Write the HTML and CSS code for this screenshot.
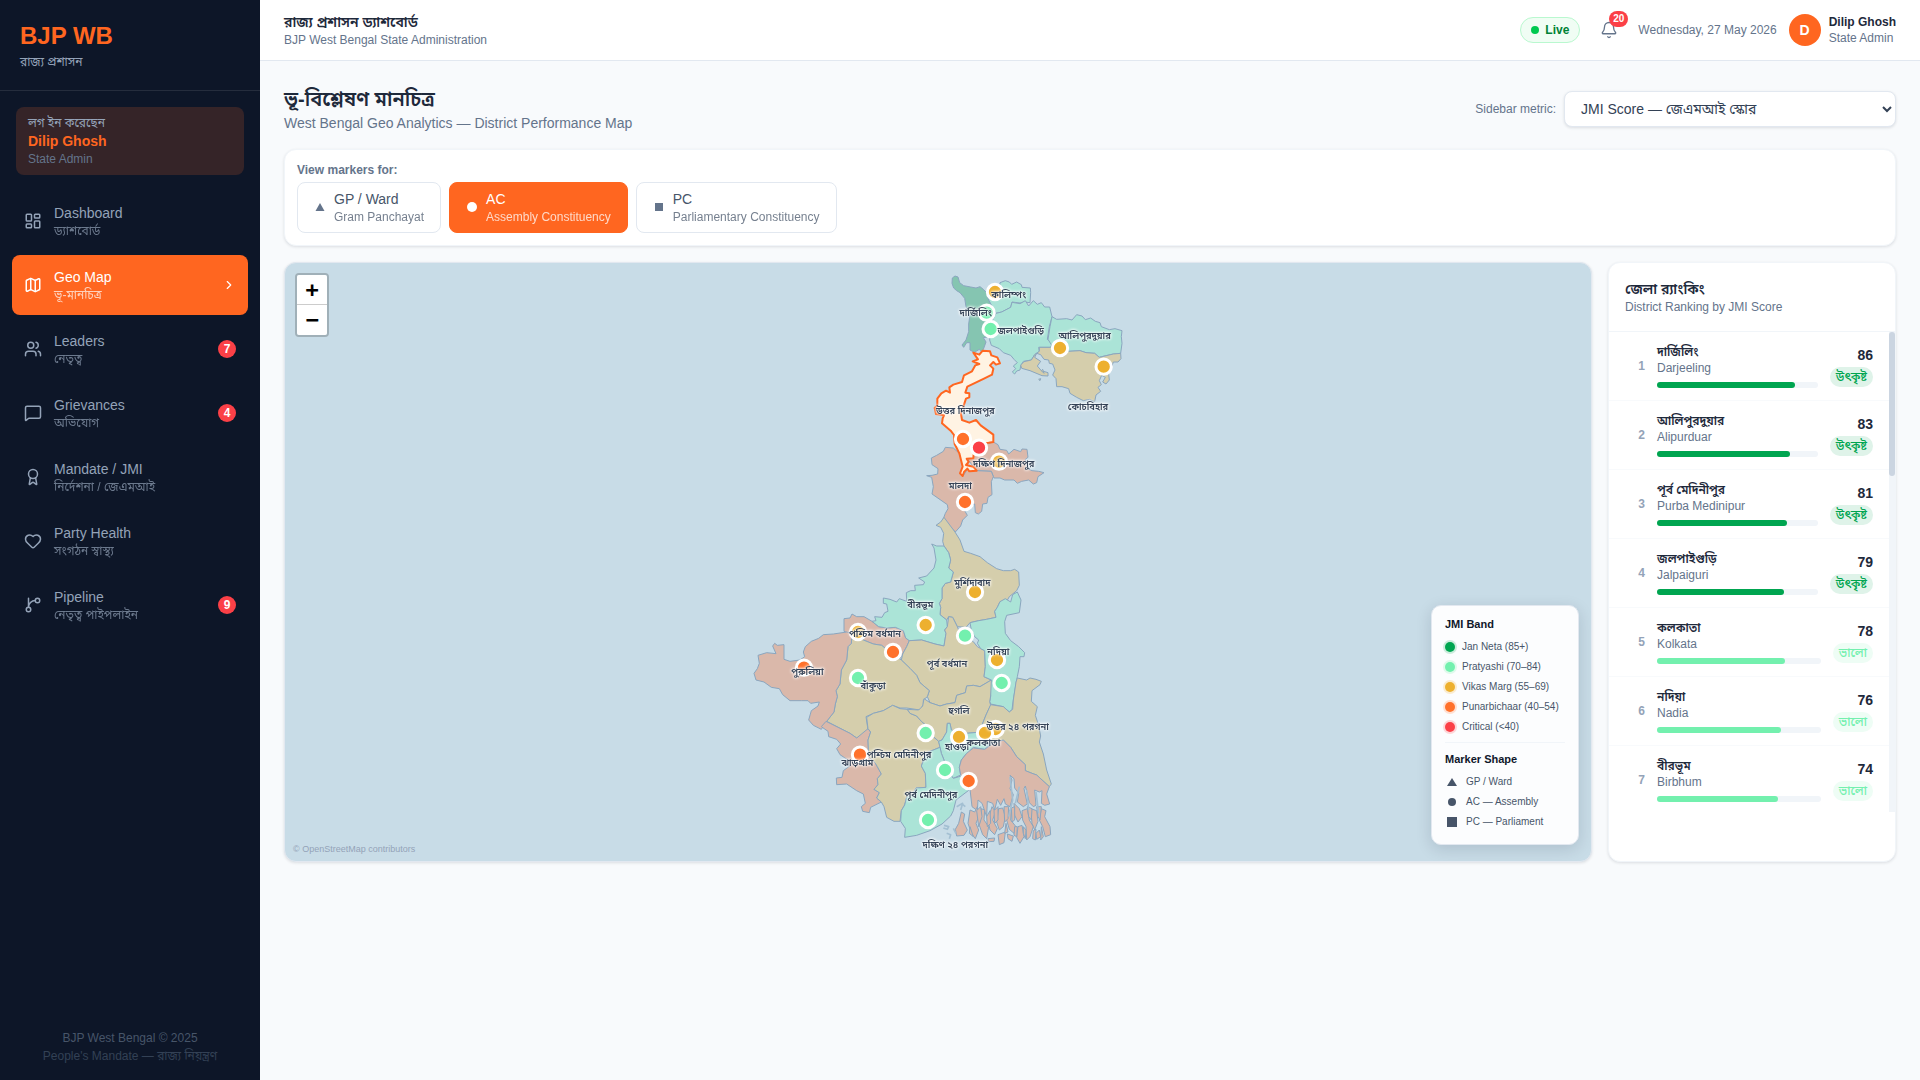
FILE: index.html
```html
<!DOCTYPE html>
<html lang="en">
<head>
<meta charset="utf-8">
<meta name="viewport" content="width=device-width, initial-scale=1">
<title>BJP WB — Geo Map</title>
<link rel="stylesheet" href="styles.css">
</head>
<body>
<div class="app">
  <aside class="sidebar">
    <div class="brand">
      <div class="brand-name">BJP WB</div>
      <div class="brand-sub">রাজ্য প্রশাসন</div>
    </div>
    <div class="user-card">
      <div class="user-card-label">লগ ইন করেছেন</div>
      <div class="user-card-name">Dilip Ghosh</div>
      <div class="user-card-role">State Admin</div>
    </div>
    <nav class="nav">
      <a class="nav-item" href="#dashboard">
        <svg class="icon" viewBox="0 0 24 24"><rect x="3" y="3" width="7" height="9" rx="1"/><rect x="14" y="3" width="7" height="5" rx="1"/><rect x="14" y="12" width="7" height="9" rx="1"/><rect x="3" y="16" width="7" height="5" rx="1"/></svg>
        <span class="nav-text"><span class="nav-title">Dashboard</span><span class="nav-sub">ড্যাশবোর্ড</span></span>
      </a>
      <a class="nav-item active" href="#map">
        <svg class="icon" viewBox="0 0 24 24"><path d="M14.106 5.553a2 2 0 0 0 1.788 0l3.659-1.83A1 1 0 0 1 21 4.619v12.764a1 1 0 0 1-.553.894l-4.553 2.277a2 2 0 0 1-1.788 0l-4.212-2.106a2 2 0 0 0-1.788 0l-3.659 1.83A1 1 0 0 1 3 19.381V6.618a1 1 0 0 1 .553-.894l4.553-2.277a2 2 0 0 1 1.788 0z"/><path d="M15 5.764v15"/><path d="M9 3.236v15"/></svg>
        <span class="nav-text"><span class="nav-title">Geo Map</span><span class="nav-sub">ভূ-মানচিত্র</span></span>
        <svg class="icon chevron" viewBox="0 0 24 24"><path d="m9 18 6-6-6-6"/></svg>
      </a>
      <a class="nav-item" href="#leaders">
        <svg class="icon" viewBox="0 0 24 24"><path d="M16 21v-2a4 4 0 0 0-4-4H6a4 4 0 0 0-4 4v2"/><path d="M16 3.128a4 4 0 0 1 0 7.744"/><path d="M22 21v-2a4 4 0 0 0-3-3.87"/><circle cx="9" cy="7" r="4"/></svg>
        <span class="nav-text"><span class="nav-title">Leaders</span><span class="nav-sub">নেতৃত্ব</span></span>
        <span class="nav-badge">7</span>
      </a>
      <a class="nav-item" href="#grievances">
        <svg class="icon" viewBox="0 0 24 24"><path d="M22 17a2 2 0 0 1-2 2H6.828a2 2 0 0 0-1.414.586l-2.202 2.202A.71.71 0 0 1 2 21.286V5a2 2 0 0 1 2-2h16a2 2 0 0 1 2 2z"/></svg>
        <span class="nav-text"><span class="nav-title">Grievances</span><span class="nav-sub">অভিযোগ</span></span>
        <span class="nav-badge">4</span>
      </a>
      <a class="nav-item" href="#mandate">
        <svg class="icon" viewBox="0 0 24 24"><path d="m15.477 12.89 1.515 8.526a.5.5 0 0 1-.81.47l-3.58-2.687a1 1 0 0 0-1.197 0l-3.586 2.686a.5.5 0 0 1-.81-.469l1.514-8.526"/><circle cx="12" cy="8" r="6"/></svg>
        <span class="nav-text"><span class="nav-title">Mandate / JMI</span><span class="nav-sub">নির্দেশনা / জেএমআই</span></span>
      </a>
      <a class="nav-item" href="#health">
        <svg class="icon" viewBox="0 0 24 24"><path d="M2 9.5a5.5 5.5 0 0 1 9.591-3.676.56.56 0 0 0 .818 0A5.49 5.49 0 0 1 22 9.5c0 2.29-1.5 4-3 5.5l-5.492 5.313a2 2 0 0 1-3 .019L5 15c-1.5-1.5-3-3.2-3-5.5"/></svg>
        <span class="nav-text"><span class="nav-title">Party Health</span><span class="nav-sub">সংগঠন স্বাস্থ্য</span></span>
      </a>
      <a class="nav-item" href="#pipeline">
        <svg class="icon" viewBox="0 0 24 24"><path d="M15 6a9 9 0 0 0-9 9V3"/><circle cx="18" cy="6" r="3"/><circle cx="6" cy="18" r="3"/></svg>
        <span class="nav-text"><span class="nav-title">Pipeline</span><span class="nav-sub">নেতৃত্ব পাইপলাইন</span></span>
        <span class="nav-badge">9</span>
      </a>
    </nav>
    <footer class="side-footer">
      <div>BJP West Bengal © 2025</div>
      <div class="side-footer-dim">People's Mandate — রাজ্য নিয়ন্ত্রণ</div>
    </footer>
  </aside>

  <div class="main">
    <header class="topbar">
      <div>
        <div class="topbar-title">রাজ্য প্রশাসন ড্যাশবোর্ড</div>
        <div class="small-muted">BJP West Bengal State Administration</div>
      </div>
      <div class="topbar-right">
        <span class="live"><span class="live-dot"></span>Live</span>
        <button class="bell" type="button" aria-label="Notifications">
          <svg class="icon" viewBox="0 0 24 24"><path d="M10.268 21a2 2 0 0 0 3.464 0"/><path d="M3.262 15.326A1 1 0 0 0 4 17h16a1 1 0 0 0 .74-1.673C19.41 13.956 18 12.499 18 8A6 6 0 0 0 6 8c0 4.499-1.411 5.956-2.738 7.326"/></svg>
          <span class="bell-badge">20</span>
        </button>
        <span class="small-muted">Wednesday, 27 May 2026</span>
        <div class="account">
          <span class="avatar">D</span>
          <div>
            <div class="account-name">Dilip Ghosh</div>
            <div class="small-muted">State Admin</div>
          </div>
        </div>
      </div>
    </header>

    <main class="content">
      <div class="page-head">
        <div>
          <h1 class="page-title">ভূ-বিশ্লেষণ মানচিত্র</h1>
          <p class="page-sub">West Bengal Geo Analytics — District Performance Map</p>
        </div>
        <div class="metric">
          <label class="small-muted" for="metric">Sidebar metric:</label>
          <select class="metric-select" id="metric"><option>JMI Score — জেএমআই স্কোর</option></select>
        </div>
      </div>

      <section class="card filter">
        <div class="filter-label">View markers for:</div>
        <div class="filter-row">
          <button class="filter-btn" type="button">
            <svg class="shape" viewBox="0 0 12 12"><path d="M6 2 10.500 10H1.500z"/></svg>
            <span class="filter-text"><span class="filter-name">GP / Ward</span><span class="filter-sub">Gram Panchayat</span></span>
          </button>
          <button class="filter-btn selected" type="button">
            <svg class="shape" viewBox="0 0 12 12"><circle cx="6" cy="6" r="5"/></svg>
            <span class="filter-text"><span class="filter-name">AC</span><span class="filter-sub">Assembly Constituency</span></span>
          </button>
          <button class="filter-btn" type="button">
            <svg class="shape" viewBox="0 0 12 12"><path d="M2 2h8v8H2z"/></svg>
            <span class="filter-text"><span class="filter-name">PC</span><span class="filter-sub">Parliamentary Constituency</span></span>
          </button>
        </div>
      </section>

      <div class="columns">
        <section class="map">
          <div class="zoom">
            <button class="zoom-btn" type="button">+</button>
            <button class="zoom-btn" type="button">−</button>
          </div>
          <svg class="map-art" viewBox="0 0 1200 1794" role="img" aria-label="West Bengal districts">
            <g class="regions" transform="translate(546 -9)">
              <path class="b1" d="M96 70 97 54 105 48 114 51 119 68 131 77 152 81 168 84 180 80 190 88 200 98 206 120 214 135 228 160 218 180 212 200 207 230 190 233 198 246 190 268 184 275 178 268 163 277 150 270 150 248 140 248 131 262 126 255 138 240 146 215 146 192 150 165 138 140 134 115 120 98 110 92 101 84z"/>
              <path class="b2" d="M200 96 215 92 238 90 240 68 256 62 268 66 275 73 290 66 304 74 306 82 331 84 332 98 330 128 312 126 300 129 276 126 272 142 245 156 228 160 214 135 206 120z"/>
              <path class="b2" d="M228 160 245 156 272 142 276 127 300 131 316 122 326 138 340 122 352 133 364 128 374 141 389 141 396 170 388 200 382 238 397 250 392 262 356 262 358 274 344 284 334 300 310 304 302 318 300 330 290 333 284 342 277 336 287 326 280 318 292 308 282 298 272 286 250 278 238 266 214 256 209 240 212 205 218 180z"/>
              <path class="b2" d="M396 170 410 178 440 176 456 180 470 164 486 168 496 179 512 174 526 184 540 188 544 200 568 209 585 206 606 212 604 230 606 250 602 280 580 282 545 290 538 292 524 280 498 278 480 272 446 274 420 286 400 264 384 238 390 200z"/>
              <path class="b3" d="M358 262 392 262 400 264 420 286 446 274 480 272 498 278 524 280 538 292 580 282 602 280 603 296 594 306 580 306 574 324 566 342 568 360 558 372 548 366 556 352 545 346 538 362 544 374 534 382 542 394 528 405 524 425 508 418 490 422 470 412 450 400 446 386 426 380 410 380 408 356 398 345 405 330 398 312 388 310 386 300 372 298 362 284 350 280 344 292 362 304 352 318 364 332 384 338 384 348 366 347 330 332 305 325 302 315 312 305 334 300 344 284 358 274z"/>
              <path class="b3" d="M356 358 362 356 360 362zM364 332 372 340 368 328z"/>
            </g>
            <g class="regions" transform="translate(516 231)">
              <path class="b4" d="M236 310 250 306 264 314 270 328 290 331 296 342 312 328 332 335 336 327 351 328 354 352 346 358 352 386 366 392 386 394 402 398 384 410 380 428 370 432 356 420 335 424 322 430 312 420 284 420 270 414 252 414 244 394 200 392 190 380 172 356 190 355 190 325z"/>
              <path class="b4" d="M148 340 154 355 158 380 150 400 158 410 172 388 200 392 244 394 250 410 244 425 246 464 234 472 231 490 218 492 215 514 205 522 196 518 194 492 180 500 164 512 172 526 158 540 152 558 136 576 100 536 106 520 114 506 112 494 66 462 70 440 65 412 50 407 66 406 83 402 84 386 66 374 64 354 80 346 100 334 106 322 130 324z"/>
            </g>
            <g class="regions" transform="translate(6 711)">
              <path class="b4" d="M312 356 330 354 336 342 350 350 372 350 396 364 416 380 440 384 466 382 490 392 497 414 508 422 500 440 488 462 480 476 450 456 425 436 400 432 370 420 336 404 312 394z"/>
              <path class="b3" d="M612 52 645 96 660 120 672 154 692 160 720 170 742 188 770 206 790 212 812 212 824 208 836 216 838 256 830 272 808 290 800 304 780 305 772 322 764 334 768 352 740 358 716 362 690 368 678 382 652 380 638 352 626 350 620 360 600 344 602 322 598 310 606 296 606 264 616 250 632 246 640 216 626 204 632 180 626 158 612 138 608 124 611 100 602 82 588 76 602 66z"/>
              <path class="b2" d="M575 132 590 138 612 138 626 158 632 180 626 204 640 216 632 246 616 250 606 264 606 296 598 310 602 322 600 344 620 360 622 380 614 390 618 400 612 438 585 432 545 420 508 422 497 414 490 392 466 382 440 384 416 380 396 364 408 362 404 350 426 352 434 338 444 334 440 312 430 310 430 294 450 298 470 306 478 296 500 304 499 278 512 272 526 272 524 256 550 254 554 246 536 234 560 228 582 204 588 180 582 144z"/>
              <path class="b3" d="M508 422 545 420 585 432 612 438 618 400 614 390 622 380 626 350 638 352 652 380 660 400 676 410 700 425 712 440 734 452 736 500 732 530 754 540 720 560 700 556 680 558 676 578 650 586 645 608 620 612 600 618 570 608 562 590 568 572 540 548 530 526 510 505 484 480 488 462 500 440z"/>
              <path class="b2" d="M832 276 843 300 838 338 800 346 794 365 796 400 812 422 836 440 854 458 852 470 840 470 838 500 832 530 828 550 820 600 816 628 808 636 790 620 752 612 749 605 752 588 748 560 754 540 732 530 736 500 734 452 722 446 712 430 716 420 704 410 694 390 690 368 716 362 740 358 768 352 764 334 772 322 780 305 796 296 812 306 818 284z"/>
              <path class="b3" d="M336 404 370 420 400 432 425 436 450 456 484 480 510 505 530 526 540 548 568 572 562 590 550 600 550 614 540 630 500 624 480 624 458 616 430 632 400 640 378 650 384 690 375 704 350 714 330 700 260 664 282 636 286 612 292 590 288 572 300 552 304 510 320 480 324 440 334 430z"/>
              <path class="b4" d="M334 430 336 400 320 396 280 402 250 404 236 415 214 424 196 440 190 456 194 470 180 480 150 484 132 478 132 434 112 436 104 430 98 438 108 461 80 458 54 466 58 490 52 506 42 520 48 540 72 546 94 562 118 566 128 584 150 602 184 602 204 602 212 610 238 606 234 618 214 632 206 660 220 676 244 688 260 664 282 636 286 612 292 590 288 572 300 552 304 510 320 480 324 440z"/>
            </g>
            <g class="regions" transform="translate(6 1191)">
              <path class="b4" d="M258 184 330 220 350 234 384 206 392 216 384 240 386 290 405 308 412 320 424 342 412 356 414 374 402 388 418 398 410 414 424 426 392 442 388 458 368 454 364 440 376 430 370 402 350 392 320 372 290 374 289 354 306 352 310 332 332 316 324 300 300 284 290 266 302 252 290 238 266 230 264 214 244 200z"/>
              <path class="b3" d="M458 136 480 146 502 148 510 160 530 168 544 184 556 194 560 215 580 230 596 244 600 262 560 278 550 300 544 318 556 340 558 382 528 384 522 396 500 412 494 435 484 452 480 484 462 484 440 472 432 440 424 426 410 414 418 398 402 388 414 374 412 356 424 342 412 320 405 308 386 290 384 240 392 216 384 206 380 172 400 160 430 152z"/>
              <path class="b3" d="M552 116 570 128 600 138 620 132 645 128 650 106 676 98 680 78 700 76 720 80 754 60 752 108 749 125 752 136 738 165 730 185 724 200 722 216 680 220 650 216 634 210 630 190 622 190 620 216 606 240 596 244 580 230 560 215 556 194 544 184 530 168 510 160 502 148 536 150 548 138z"/>
              <path class="b3" d="M752 134 790 140 808 156 818 148 820 120 828 66 832 54 860 60 870 54 888 58 904 64 900 74 876 92 874 124 892 140 886 166 896 196 902 228 898 246 910 282 920 330 934 372 928 380 890 345 876 340 856 332 856 314 830 290 812 262 790 240 760 250 740 235 724 216 724 200 738 165z"/>
              <path class="b2" d="M622 190 630 190 634 210 650 216 680 220 722 216 740 235 745 256 734 268 700 262 680 280 664 300 658 322 662 345 640 355 620 330 612 300 604 280 600 262 596 244 606 240 620 216z"/>
              <path class="b2" d="M600 262 560 278 544 318 556 340 558 382 528 384 522 396 500 412 494 435 484 452 482 484 496 505 494 532 530 526 570 512 606 492 632 468 640 452 648 420 690 388 680 362 664 348 640 355 620 330 612 300 604 280z"/>
              <path class="b4" d="M664 300 680 280 700 264 734 268 760 250 790 240 812 262 830 290 856 314 856 332 876 340 890 345 928 380 920 402 929 432 914 436 904 430 906 392 898 396 884 390 888 436 880 440 868 428 856 378 852 386 862 432 850 440 832 426 836 400 824 384 822 356 810 346 816 360 810 386 820 404 810 440 796 432 792 416 782 436 772 418 764 450 758 430 742 424 740 470 726 430 714 420 712 452 696 440 690 388 680 362 662 345 658 322z"/>
              <path class="b4" d="M664 456 674 462 670 484 682 510 672 526 650 528 646 508 656 490zM690 450 704 456 712 440 716 470 708 490 716 510 706 536 694 520 684 490zM724 446 734 450 732 480 746 500 740 536 728 524 718 496zM744 480 756 440 766 456 758 480 772 506 764 524 750 510zM776 446 788 444 796 470 790 500 778 510 770 486zM774 524 796 516 792 548 778 554zM804 450 814 452 812 480 828 500 822 520 808 508 800 480zM822 430 838 446 846 470 834 486 824 466zM802 522 820 528 816 544 804 536zM834 500 846 496 852 530 840 550 830 532zM846 452 862 446 868 480 880 500 870 530 860 540 858 500 848 480zM872 446 890 452 894 484 884 510 876 490zM888 520 898 510 902 530 890 538zM904 446 918 452 914 470 930 500 932 524 916 530 908 500 898 480zM744 536 764 534 762 544 746 545z"/>
              <path class="b4" d="M710 452 722 440 726 470 716 500zM740 470 750 452 752 490 742 500zM762 452 774 440 774 480 764 490zM792 440 806 440 804 476 794 486zM814 444 824 440 824 480 816 486zM862 440 876 446 874 480 866 470zM890 440 904 440 900 480 894 470zM690 500 700 530 688 520zM798 490 804 516 794 520zM824 500 832 500 830 530 822 526zM850 500 858 510 856 536 850 520zM880 512 888 508 886 540 878 536zM904 500 910 530 902 540z"/>
              <path class="water" d="M810 350 818 420 806 470M838 380 826 430M860 390 866 450M888 396 896 460"/>
              <path class="water" d="M612 496 626 500 622 508 610 504M620 520 632 524 628 536M650 440 668 430 662 450M664 430 676 440M640 505 648 520"/>
            </g>
            <path class="selected-region" transform="translate(516 231)" d="M190 38 208 44 218 32 240 34 244 46 262 52 270 70 258 74 250 66 240 76 250 86 246 104 222 116 172 140 166 158 178 160 178 172 168 176 160 200 152 215 156 240 178 248 198 240 212 256 250 284 250 306 236 308 210 310 192 330 190 355 170 356 176 366 168 375 190 380 200 392 178 394 172 386 162 396 158 408 150 400 158 380 148 340 134 312 132 285 122 272 96 250 98 235 102 226 78 222 74 204 82 196 82 176 94 160 108 152 120 158 118 142 130 134 156 126 162 106 186 94 196 76 208 72 188 64 204 58z"/>

            <g class="markers" transform="translate(546 -9)">
              <circle class="m3" cx="225" cy="96" r="23"/><circle class="m2" cx="200" cy="158" r="23"/><circle class="m2" cx="212" cy="207" r="23"/><circle class="m3" cx="420" cy="264" r="23"/><circle class="m3" cx="551" cy="320" r="23"/>
            </g>
            <g class="markers" transform="translate(516 231)">
              <circle class="m4" cx="159" cy="297" r="23"/><circle class="m5" cx="207" cy="323" r="23"/><circle class="m3" cx="267" cy="365" r="23"/><circle class="m4" cx="165" cy="486" r="23"/>
            </g>
            <g class="markers" transform="translate(6 711)">
              <circle class="m3" cx="705" cy="276" r="23"/><circle class="m3" cx="557" cy="375" r="23"/><circle class="m3" cx="354" cy="396" r="23"/><circle class="m4" cx="459" cy="456" r="23"/><circle class="m4" cx="192" cy="503" r="23"/><circle class="m2" cx="354" cy="534" r="23"/><circle class="m2" cx="675" cy="407" r="23"/><circle class="m3" cx="771" cy="480" r="23"/><circle class="m2" cx="785" cy="549" r="23"/>
            </g>
            <g class="markers" transform="translate(6 1191)">
              <circle class="m2" cx="557" cy="219" r="23"/><circle class="m3" cx="657" cy="231" r="23"/><circle class="m3" cx="767" cy="207" r="23"/><circle class="m3" cx="735" cy="219" r="23"/><circle class="m4" cx="360" cy="284" r="23"/><circle class="m2" cx="615" cy="330" r="23"/><circle class="m4" cx="686" cy="363" r="23"/><circle class="m2" cx="564" cy="480" r="23"/>
            </g>

            <g class="labels" transform="translate(546 0)">
              <text x="266" y="105">কালিম্পং</text><text x="167" y="159">দার্জিলিং</text><text x="302" y="212">জলপাইগুড়ি</text><text x="494" y="228">আলিপুরদুয়ার</text><text x="504" y="440">কোচবিহার</text>
            </g>
            <g class="labels" transform="translate(516 240)">
              <text x="166" y="212">উত্তর দিনাজপুর</text><text x="281" y="371">দক্ষিণ দিনাজপুর</text><text x="151" y="437">মালদা</text>
            </g>
            <g class="labels" transform="translate(6 720)">
              <text x="697" y="250">মুর্শিদাবাদ</text><text x="541" y="314">বীরভূম</text><text x="405" y="401">পশ্চিম বর্ধমান</text><text x="621" y="491">পূর্ব বর্ধমান</text><text x="775" y="455">নদিয়া</text><text x="202" y="515">পুরুলিয়া</text><text x="399" y="557">বাঁকুড়া</text>
            </g>
            <g class="labels" transform="translate(6 1200)">
              <text x="657" y="152">হুগলি</text><text x="833" y="200">উত্তর ২৪ পরগনা</text><text x="651" y="261">হাওড়া</text><text x="730" y="248">কলকাতা</text><text x="477" y="284">পশ্চিম মেদিনীপুর</text><text x="352" y="308">ঝাড়গ্রাম</text><text x="573" y="405">পূর্ব মেদিনীপুর</text><text x="646" y="556">দক্ষিণ ২৪ পরগনা</text>
            </g>
          </svg>
          <div class="attribution">© OpenStreetMap contributors</div>
          <div class="legend">
            <div class="legend-title">JMI Band</div>
            <ul class="legend-list">
              <li><span class="dot d1"></span>Jan Neta (85+)</li>
              <li><span class="dot d2"></span>Pratyashi (70–84)</li>
              <li><span class="dot d3"></span>Vikas Marg (55–69)</li>
              <li><span class="dot d4"></span>Punarbichaar (40–54)</li>
              <li><span class="dot d5"></span>Critical (&lt;40)</li>
            </ul>
            <div class="legend-title legend-second">Marker Shape</div>
            <ul class="legend-list">
              <li><svg class="legend-shape" viewBox="0 0 14 14"><path d="M7 3 12 11H2z"/></svg>GP / Ward</li>
              <li><svg class="legend-shape" viewBox="0 0 14 14"><circle cx="7" cy="7" r="4"/></svg>AC — Assembly</li>
              <li><svg class="legend-shape" viewBox="0 0 14 14"><path d="M2 2h10v10H2z"/></svg>PC — Parliament</li>
            </ul>
          </div>
        </section>

        <aside class="card ranking">
          <div class="ranking-head">
            <h2 class="ranking-title">জেলা র‍্যাংকিং</h2>
            <p class="small-muted">District Ranking by JMI Score</p>
          </div>
          <div class="rank-scroll">
          <ol class="rank-list">
            <li class="rank s1"><span class="rank-no">1</span><div class="rank-mid"><div class="rank-bn">দার্জিলিং</div><div class="rank-en">Darjeeling</div><div class="bar"><div class="fill" style="width:86%"></div></div></div><div class="rank-end"><span class="score">86</span><span class="pill">উৎকৃষ্ট</span></div></li>
            <li class="rank s1"><span class="rank-no">2</span><div class="rank-mid"><div class="rank-bn">আলিপুরদুয়ার</div><div class="rank-en">Alipurduar</div><div class="bar"><div class="fill" style="width:83%"></div></div></div><div class="rank-end"><span class="score">83</span><span class="pill">উৎকৃষ্ট</span></div></li>
            <li class="rank s1"><span class="rank-no">3</span><div class="rank-mid"><div class="rank-bn">পূর্ব মেদিনীপুর</div><div class="rank-en">Purba Medinipur</div><div class="bar"><div class="fill" style="width:81%"></div></div></div><div class="rank-end"><span class="score">81</span><span class="pill">উৎকৃষ্ট</span></div></li>
            <li class="rank s1"><span class="rank-no">4</span><div class="rank-mid"><div class="rank-bn">জলপাইগুড়ি</div><div class="rank-en">Jalpaiguri</div><div class="bar"><div class="fill" style="width:79%"></div></div></div><div class="rank-end"><span class="score">79</span><span class="pill">উৎকৃষ্ট</span></div></li>
            <li class="rank s2"><span class="rank-no">5</span><div class="rank-mid"><div class="rank-bn">কলকাতা</div><div class="rank-en">Kolkata</div><div class="bar"><div class="fill" style="width:78%"></div></div></div><div class="rank-end"><span class="score">78</span><span class="pill">ভালো</span></div></li>
            <li class="rank s2"><span class="rank-no">6</span><div class="rank-mid"><div class="rank-bn">নদিয়া</div><div class="rank-en">Nadia</div><div class="bar"><div class="fill" style="width:76%"></div></div></div><div class="rank-end"><span class="score">76</span><span class="pill">ভালো</span></div></li>
            <li class="rank s2"><span class="rank-no">7</span><div class="rank-mid"><div class="rank-bn">বীরভূম</div><div class="rank-en">Birbhum</div><div class="bar"><div class="fill" style="width:74%"></div></div></div><div class="rank-end"><span class="score">74</span><span class="pill">ভালো</span></div></li>
          </ol>
          <div class="scroll-track"><div class="scroll-thumb"></div></div>
          </div>
        </aside>
      </div>
    </main>
  </div>
</div>
</body>
</html>
```
FILE: styles.css
```css
*, *::before, *::after { box-sizing: border-box; }
body, h1, h2, p, ul, ol { margin: 0; padding: 0; }
ul, ol { list-style: none; }
body {
  font-family: "Liberation Sans", "Noto Sans Bengali", sans-serif;
  font-size: 14px;
  line-height: 20px;
  color: #1e293b;
  background: #f8fafc;
}
button, select { font: inherit; }
a { color: inherit; text-decoration: none; }
.app { display: flex; min-height: 100vh; }

.icon {
  width: 18px; height: 18px; flex: none; display: block;
  fill: none; stroke: currentColor; stroke-width: 2;
  stroke-linecap: round; stroke-linejoin: round;
}
.small-muted { font-size: 12px; line-height: 16px; color: #64748b; }

/* Sidebar */
.sidebar {
  width: 260px; flex: none; display: flex; flex-direction: column;
  background: #0d1628; color: #94a3b8;
}
.brand { padding: 20px; border-bottom: 1px solid #252d3d; }
.brand-name { font-size: 24px; line-height: 32px; font-weight: 700; color: #ff6620; }
.brand-sub { margin-top: 2px; font-size: 12px; line-height: 16px; }
.user-card {
  margin: 16px 16px 0; padding: 8px 12px; border-radius: 8px;
  background: #352428; font-size: 12px; line-height: 16px;
}
.user-card-name { font-size: 14px; line-height: 20px; font-weight: 700; color: #ff6620; }
.user-card-role { color: #64748b; }
.nav { flex: 1; display: flex; flex-direction: column; gap: 4px; padding: 16px 12px; }
.nav-item { display: flex; align-items: center; gap: 12px; padding: 12px; border-radius: 8px; }
.nav-item.active { background: #ff6620; color: #fff; }
.nav-text { flex: 1; display: flex; flex-direction: column; }
.nav-sub { font-size: 12px; line-height: 16px; opacity: .7; }
.nav-badge {
  min-width: 18px; height: 18px; border-radius: 9px; background: #fb4047; color: #fff;
  font-size: 12px; line-height: 18px; font-weight: 700; text-align: center;
}
.chevron { width: 14px; height: 14px; }
.side-footer {
  display: flex; flex-direction: column; gap: 2px; padding: 16px;
  text-align: center; font-size: 12px; line-height: 16px; color: #475569;
}
.side-footer-dim { color: #334155; }

/* Top bar */
.main { flex: 1; min-width: 0; }
.topbar {
  display: flex; justify-content: space-between; align-items: center;
  padding: 12px 24px; background: #fff; border-bottom: 1px solid #e2e8f0;
}
.topbar-title { font-weight: 600; color: #1e293b; }
.topbar-right { display: flex; align-items: center; gap: 12px; height: 36px; }
.live {
  display: flex; align-items: center; gap: 6px; padding: 4px 10px;
  border: 1px solid #b9f8cf; border-radius: 13px; background: #f0fdf4;
  font-size: 12px; line-height: 16px; font-weight: 700; color: #008236;
}
.live-dot { width: 8px; height: 8px; border-radius: 50%; background: #00c950; }
.bell { position: relative; padding: 8px; border: 0; background: none; color: #64748b; }
.bell .icon { stroke-width: 1.75; }
.bell-badge {
  position: absolute; top: -2px; right: -2px; padding: 0 4px; border-radius: 8px;
  background: #fb4047; color: #fff; font-size: 10px; line-height: 16px; font-weight: 700;
}
.account { display: flex; align-items: center; gap: 8px; }
.avatar {
  width: 32px; height: 32px; border-radius: 50%; background: #ff6620; color: #fff;
  font-weight: 700; line-height: 32px; text-align: center;
}
.account-name { font-size: 12px; line-height: 16px; font-weight: 700; }

/* Page */
.content { display: flex; flex-direction: column; gap: 16px; padding: 24px; }
.page-head { display: flex; justify-content: space-between; align-items: center; }
.page-title { font-size: 20px; line-height: 28px; font-weight: 600; }
.page-sub { color: #64748b; }
.metric { display: flex; align-items: center; gap: 8px; }
.metric-select {
  width: 332px; height: 36px; padding: 0 0 0 12px; border: 1px solid #e2e8f0;
  border-radius: 8px; background: #fff; color: #334155;
  box-shadow: 0 1px 3px rgba(15, 23, 42, .12);
}
.card {
  background: #fff; border: 1px solid #f1f5f9; border-radius: 12px;
  box-shadow: 0 1px 3px rgba(15, 23, 42, .12);
}
.filter { padding: 12px; }
.filter-label { margin-bottom: 4px; font-size: 12px; line-height: 16px; font-weight: 700; color: #64748b; }
.filter-row { display: flex; gap: 8px; }
.filter-btn {
  display: flex; align-items: center; gap: 8px; padding: 6px 16px 7px;
  border: 1px solid #e2e8f0; border-radius: 8px; background: #fff; color: #475569; text-align: left;
}
.filter-btn.selected { background: #ff6620; border-color: #ff6620; color: #fff; }
.filter-text { display: flex; flex-direction: column; }
.filter-sub { font-size: 12px; line-height: 16px; opacity: .75; }
.shape { width: 12px; height: 12px; flex: none; fill: #64748b; }
.selected .shape { fill: #fff; }
.columns { display: grid; grid-template-columns: minmax(0, 1fr) 288px; gap: 16px; }

/* Map */
.map {
  position: relative; height: 600px; overflow: hidden; display: flex; justify-content: center;
  border: 1px solid #e2e8f0; border-radius: 12px; background: #c8dce7;
  box-shadow: 0 1px 3px rgba(15, 23, 42, .12);
}
.map-art { width: 400px; height: 598px; flex: none; }
.regions path { stroke: #8aa6bf; stroke-width: 3; stroke-linejoin: round; }
.b1 { fill: #85c5b1; }
.b2 { fill: #abe4d7; }
.b3 { fill: #d5ceac; }
.b4 { fill: #dab8aa; }
.regions .water { fill: none; stroke: #a3bfd2; stroke-width: 5; }
.selected-region { fill: #fff3e3; stroke: #ff6620; stroke-width: 6; stroke-linejoin: round; }
.markers circle { stroke: #fff; stroke-width: 9; }
.m2 { fill: #73f0ae; }
.m3 { fill: #edb02f; }
.m4 { fill: #ff712b; }
.m5 { fill: #fb4047; }
.labels text {
  font-size: 28px; font-weight: 600; fill: #334155; text-anchor: middle;
  filter: drop-shadow(0 0 3px #fff) drop-shadow(0 0 4px #fff);
}
.zoom {
  position: absolute; top: 10px; left: 10px; z-index: 1; display: flex; flex-direction: column;
  border: 2px solid rgba(0, 0, 0, .2); border-radius: 4px; background-clip: padding-box;
}
.zoom-btn {
  width: 30px; height: 30px; padding: 0; border: 0; background: #fff; color: #000;
  font: bold 22px/30px "DejaVu Sans Mono", monospace;
}
.zoom-btn:first-child { border-bottom: 1px solid #ccc; border-radius: 2px 2px 0 0; }
.zoom-btn:last-child { border-radius: 0 0 2px 2px; }
.attribution { position: absolute; left: 8px; bottom: 6px; font-size: 9px; line-height: 12px; color: #94a3b8; }
.legend {
  position: absolute; right: 12px; bottom: 16px; width: 148px; padding: 11px 13px 12px;
  border: 1px solid #e2e8f0; border-radius: 10px; background: #fcfdfe;
  box-shadow: 0 4px 16px rgba(15, 23, 42, .14); color: #475569; font-size: 10px;
}
.legend-title { margin-bottom: 5px; font-size: 11px; line-height: 15px; font-weight: 700; color: #0f172a; }
.legend-second { margin-top: 5px; padding-top: 9px; border-top: 1px solid #f1f5f9; }
.legend-list li { display: flex; align-items: center; gap: 7px; line-height: 20px; }
.dot { width: 10px; height: 10px; border-radius: 50%; }
.d1 { background: #00a550; box-shadow: 0 0 0 2px #ccecdc; }
.d2 { background: #73f0ae; box-shadow: 0 0 0 2px #dffaeb; }
.d3 { background: #edb02f; box-shadow: 0 0 0 2px #faecd0; }
.d4 { background: #ff712b; box-shadow: 0 0 0 2px #ffe0d2; }
.d5 { background: #fb4047; box-shadow: 0 0 0 2px #fdd6d8; }
.legend-shape { width: 14px; height: 14px; fill: #475569; }

/* Ranking */
.ranking-head { padding: 16px; border-bottom: 1px solid #f1f5f9; }
.ranking-title { font-size: 14px; line-height: 20px; font-weight: 600; }
.rank-scroll { display: flex; }
.rank-list { flex: 1; min-width: 0; }
.scroll-track { width: 6px; background: #f1f5f9; }
.scroll-thumb { height: 30%; border-radius: 3px; background: #cbd5e1; }
.rank { display: flex; align-items: center; gap: 12px; padding: 12px 16px; border-bottom: 1px solid #f8fafc; }
.rank:last-child { padding-bottom: 10px; border-bottom: 0; }
.rank-no { width: 20px; font-size: 12px; line-height: 16px; font-weight: 700; color: #94a3b8; text-align: right; }
.rank-mid { flex: 1; min-width: 0; }
.rank-bn { font-size: 12px; line-height: 16px; font-weight: 600; }
.rank-en { font-size: 12px; line-height: 16px; color: #64748b; }
.bar { margin-top: 6px; height: 6px; border-radius: 3px; background: #f1f5f9; }
.fill { height: 6px; border-radius: 3px; }
.rank-end { display: flex; flex-direction: column; align-items: flex-end; gap: 2px; }
.score { font-weight: 700; }
.pill { padding: 2px 6px; border-radius: 10px; font-size: 12px; line-height: 16px; font-weight: 500; }
.s1 .fill { background: #00a550; }
.s1 .pill { background: #dff3e9; color: #00a550; }
.s2 .fill { background: #73f0ae; }
.s2 .pill { background: #eefdf5; color: #73f0ae; }
```
